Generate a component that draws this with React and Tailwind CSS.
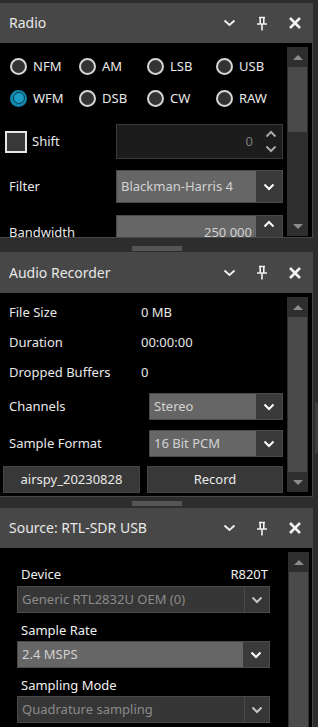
import React from "react";

const ChevronDown = ({ className = "" }) => (
  <svg width="12" height="8" viewBox="0 0 12 8" className={className}>
    <path d="M1.5 1.5 6 6l4.5-4.5" fill="none" stroke="currentColor" strokeWidth="2" />
  </svg>
);

const ChevronUp = ({ className = "" }) => (
  <svg width="12" height="8" viewBox="0 0 12 8" className={className}>
    <path d="M1.5 6.5 6 2l4.5 4.5" fill="none" stroke="currentColor" strokeWidth="2" />
  </svg>
);

// panel title bar: title + collapse / pin / close
const PanelHeader = ({ title, tall }) => (
  <div
    className={`${tall ? "h-[41px]" : "h-[40px]"} bg-[#474747] flex items-center pl-[9px] pr-[10px] border-r border-[#474747]`}
  >
    <span className="flex-1 text-[14px] text-[#e8e8e8]">{title}</span>
    <div className="flex items-center gap-[20px] text-[#f2f2f2]">
      <svg width="13" height="8" viewBox="0 0 13 8">
        <path d="M1.5 1.5 6.5 6l5-4.5" fill="none" stroke="currentColor" strokeWidth="1.8" />
      </svg>
      <svg width="12" height="15" viewBox="0 0 12 15">
        <path d="M3 1.5h6M4.2 1.5v6.5M7.8 1.5v6.5M1 8h10M6 8v6.5" fill="none" stroke="currentColor" strokeWidth="1.6" />
      </svg>
      <svg width="14" height="14" viewBox="0 0 14 14">
        <path d="M2 2l10 10M12 2 2 12" fill="none" stroke="currentColor" strokeWidth="2.6" />
      </svg>
    </div>
  </div>
);

const Splitter = ({ className }) => (
  <div className={`flex flex-col items-center ${className}`}>
    <div className="w-[50px] h-[5px] bg-[#555555]" />
  </div>
);

const ScrollBar = ({ className, thumbClass, track }) => (
  <div className={`w-[21px] flex flex-col bg-[#2e2e2e] ${className}`}>
    <div className="h-[20px] flex items-center justify-center">
      <div className="w-0 h-0 border-x-[5px] border-x-transparent border-b-[5px] border-b-[#8c8c8c]" />
    </div>
    <div className={`mx-[1px] bg-[#4a4a4a] ${thumbClass}`} />
    {track && <div className="flex-1" />}
    {track !== undefined && (
      <div className="h-[20px] flex items-center justify-center">
        <div className="w-0 h-0 border-x-[5px] border-x-transparent border-t-[5px] border-t-[#8c8c8c]" />
      </div>
    )}
  </div>
);

const RadioOpt = ({ label, checked }) => (
  <div className="flex items-center gap-[6px] h-[32px]">
    {checked ? (
      <div className="w-[17px] h-[17px] rounded-full bg-[#1287ad] flex items-center justify-center">
        <div className="w-[12px] h-[12px] rounded-full border-[1.5px] border-[#0b3e50] bg-[#1a9cc6]" />
      </div>
    ) : (
      <div className="w-[17px] h-[17px] rounded-full border-2 border-[#d6d6d6] bg-[#333333]" />
    )}
    <span className="text-[#e8e8e8]">{label}</span>
  </div>
);

const Combo = ({ text, enabled, className }) =>
  enabled ? (
    <div className={`flex border border-[#4a4a4a] bg-[#666666] ${className}`}>
      <span className="flex-1 flex items-center pl-[4px] text-[#d2d2d2] truncate">{text}</span>
      <div className="w-[26px] bg-[#3a3a3a] flex items-center justify-center text-white">
        <ChevronDown />
      </div>
    </div>
  ) : (
    <div className={`flex border border-[#4a4a4a] bg-[#363636] ${className}`}>
      <span className="flex-1 flex items-center pl-[4px] text-[#8a8a8a] truncate">{text}</span>
      <div className="w-[25px] border-l border-[#4a4a4a] flex items-center justify-center text-[#c4c4c4]">
        <ChevronDown />
      </div>
    </div>
  );

const InfoRow = ({ label, value, className }) => (
  <div className={`flex items-center ${className}`}>
    <span className="w-[141px] pl-[9px] text-[#e8e8e8]">{label}</span>
    <span className="text-[#e8e8e8]">{value}</span>
  </div>
);

const SourceLabel = ({ children, right }) => (
  <div className="h-[20px] flex items-center pl-[4px] pr-[2px] text-[#f0f0f0]">
    <span className="flex-1">{children}</span>
    {right && <span>{right}</span>}
  </div>
);

export default function App() {
  return (
    <div className="w-[318px] h-[727px] overflow-hidden bg-[#2d2d2d] flex font-['Noto_Sans',sans-serif] text-[13px] leading-none">
      <div className="w-[313px] flex flex-col pt-[3px]">
        {/* Radio */}
        <PanelHeader title="Radio" />
        <div className="h-[195px] flex bg-black border-r border-b border-[#474747]">
          <div className="flex-1 overflow-hidden pt-[7px]">
            <div className="grid grid-cols-[69px_68px_69px_69px] pl-[10px]">
              <RadioOpt label="NFM" />
              <RadioOpt label="AM" />
              <RadioOpt label="LSB" />
              <RadioOpt label="USB" />
              <RadioOpt label="WFM" checked />
              <RadioOpt label="DSB" />
              <RadioOpt label="CW" />
              <RadioOpt label="RAW" />
            </div>

            <div className="mt-[10px] h-[35px] flex items-center">
              <div className="w-[116px] pl-[5px] flex items-center gap-[5px]">
                <div className="w-[22px] h-[22px] border-2 border-[#e6e6e6] bg-[#383838]" />
                <span className="text-[#e8e8e8]">Shift</span>
              </div>
              <div className="w-[167px] h-full flex border border-[#3a3a3a] bg-[#1c1c1c]">
                <span className="flex-1 flex items-center justify-end pr-[7px] text-[#7c7c7c]">0</span>
                <div className="w-[22px] flex flex-col items-center justify-around py-[2px] text-[#a8a8a8]">
                  <ChevronUp />
                  <ChevronDown />
                </div>
              </div>
            </div>

            <div className="mt-[11px] h-[33px] flex items-center">
              <span className="w-[116px] pl-[9px] text-[#e8e8e8]">Filter</span>
              <Combo text="Blackman-Harris 4" enabled className="w-[167px] h-full" />
            </div>

            <div className="mt-[12px] h-[34px] flex items-center">
              <span className="w-[116px] pl-[9px] text-[#e8e8e8]">Bandwidth</span>
              <div className="w-[167px] h-full flex border border-[#4a4a4a] bg-[#666666]">
                <span className="flex-1 flex items-center justify-end pr-[4px] text-[#d2d2d2]">250 000</span>
                <div className="w-[26px] bg-[#3a3a3a] flex flex-col items-center justify-around text-white">
                  <ChevronUp />
                  <ChevronDown />
                </div>
              </div>
            </div>
          </div>
          <ScrollBar className="mt-[4px] mb-[1px] mr-[4px]" thumbClass="h-[65px]" track />
        </div>

        <Splitter className="h-[14px] pt-[8px]" />

        {/* Audio Recorder */}
        <PanelHeader title="Audio Recorder" tall />
        <div className="h-[204px] flex bg-black border-r border-b border-[#474747]">
          <div className="flex-1 overflow-hidden pt-[4px]">
            <InfoRow label="File Size" value="0 MB" className="h-[30px]" />
            <InfoRow label="Duration" value="00:00:00" className="h-[30px]" />
            <InfoRow label="Dropped Buffers" value="0" className="h-[31px]" />

            <div className="mt-[5px] h-[27px] flex items-center">
              <span className="w-[149px] pl-[9px] text-[#e8e8e8]">Channels</span>
              <Combo text="Stereo" enabled className="w-[134px] h-full" />
            </div>
            <div className="mt-[10px] h-[27px] flex items-center">
              <span className="w-[149px] pl-[9px] text-[#e8e8e8]">Sample Format</span>
              <Combo text="16 Bit PCM" enabled className="w-[134px] h-full" />
            </div>

            <div className="mt-[9px] h-[27px] flex gap-[7px] pl-[3px]">
              <button className="w-[137px] h-full bg-[#383838] border border-[#444444] text-[#e8e8e8]">
                airspy_20230828
              </button>
              <button className="w-[136px] h-full bg-[#383838] border border-[#444444] text-[#e8e8e8]">
                Record
              </button>
            </div>
          </div>
          <ScrollBar className="mt-[4px] mb-[4px] mr-[4px]" thumbClass="flex-1" track={false} />
        </div>

        <Splitter className="h-[11px] pt-[4px]" />

        {/* Source */}
        <PanelHeader title="Source: RTL-SDR USB" />
        <div className="flex-1 flex bg-black border-r border-[#474747]">
          <div className="w-[288px] overflow-hidden pt-[16px] pl-[17px]">
            <div className="w-[253px]">
              <SourceLabel right="R820T">Device</SourceLabel>
              <Combo text="Generic RTL2832U OEM (0)" className="mt-[2px] h-[27px]" />
              <div className="mt-[7px]">
                <SourceLabel>Sample Rate</SourceLabel>
              </div>
              <Combo text="2.4 MSPS" enabled className="mt-[1px] h-[27px]" />
              <div className="mt-[7px]">
                <SourceLabel>Sampling Mode</SourceLabel>
              </div>
              <Combo text="Quadrature sampling" className="mt-[1px] h-[27px]" />
            </div>
          </div>
          <ScrollBar className="mt-[4px] mr-[3px]" thumbClass="flex-1" />
        </div>
      </div>

      {/* outer sidebar scrollbar */}
      <div className="w-[5px] flex flex-col">
        <div className="mt-[403px] ml-[2px] w-[3px] h-[50px] bg-[#3d3d3d]" />
      </div>
    </div>
  );
}
